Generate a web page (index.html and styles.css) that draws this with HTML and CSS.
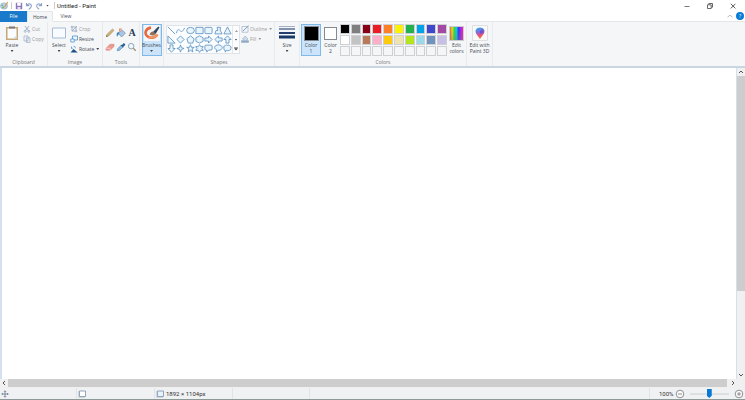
FILE: index.html
```html
<!DOCTYPE html>
<html lang="en">
<head>
<meta charset="utf-8">
<title>Untitled - Paint</title>
<link rel="stylesheet" href="styles.css">
</head>
<body>
<header class="titlebar">
  <svg class="app-icon" viewBox="0 0 9 9"><ellipse cx="4" cy="5" rx="3.6" ry="3.2" fill="#b9d3df" stroke="#91a9b5" stroke-width=".5"/><circle cx="2.2" cy="4.2" r=".8" fill="#4ca7d8"/><circle cx="3" cy="6.4" r=".8" fill="#63ae58"/><path d="M3.8 5.8 7.2.8l1 .7-3 5z" fill="#cda36d"/></svg>
  <span class="divider"></span>
  <button class="quick save" aria-label="Save"><svg viewBox="0 0 8 8"><path d="M.8.8h6.4v6.4H.8z" fill="#8b78bb"/><path d="M2.2.8h3.6v3H2.2z" fill="#fff"/><path d="M2.5 5h3v2.2h-3z" fill="#e6e1f3"/></svg></button>
  <button class="quick" aria-label="Undo"><svg viewBox="0 0 8 8"><path d="M1.5 1v2.6h2.8M1.8 3.2C4 .7 7 2 6.3 4.4 6 5.8 5 6.6 3.8 7.2" fill="none" stroke="#8c9fc6" stroke-width="1.1"/></svg></button>
  <button class="quick" aria-label="Redo"><svg viewBox="0 0 8 8"><path d="M6.5 1v2.6H3.7M6.2 3.2C4 .7 1 2 1.7 4.4 2 5.8 3 6.6 4.2 7.2" fill="none" stroke="#91a6c6" stroke-width="1.1"/></svg></button>
  <button class="more" aria-label="Customize toolbar"><i class="caret"></i></button>
  <span class="divider"></span>
  <h1>Untitled - Paint</h1>
  <div class="window-controls">
    <button aria-label="Minimize"><svg viewBox="0 0 8 8"><path d="M1.5 4.5h5" stroke="#555" stroke-width=".8"/></svg></button>
    <button aria-label="Restore"><svg viewBox="0 0 8 8"><path d="M1.5 2.8h3.7v3.7H1.5zM2.8 2.6V1.5h3.7v3.7H5.4" fill="none" stroke="#444" stroke-width=".8"/></svg></button>
    <button aria-label="Close"><svg viewBox="0 0 8 8"><path d="m1.8 1.8 4.6 4.6M6.4 1.8 1.8 6.4" stroke="#333" stroke-width=".8"/></svg></button>
  </div>
</header>
<nav class="tabs">
  <button class="tab file">File</button><button class="tab active">Home</button><button class="tab">View</button>
  <div class="help">
    <button aria-label="Collapse ribbon"><svg viewBox="0 0 8 8"><path d="m1.5 5.2 2.5-2 2.5 2" fill="none" stroke="#aaa" stroke-width=".8"/></svg></button>
    <button aria-label="Help" class="help-button">?</button>
  </div>
</nav>
<main class="ribbon">
  <section class="group">
    <div class="tools clipboard">
      <button class="big"><svg class="large" viewBox="0 0 16 16"><path d="M2 2h12v13H2z" fill="#c6a878"/><path d="M3.5 3.5h9v10h-9z" fill="#fafcff"/><path d="M5 1.5h6v2H5z" fill="#797979"/><path d="M9.5 13.5h3v-3z" fill="#cad5df"/></svg><span>Paste</span><i class="caret"></i></button>
      <div class="stack">
        <button class="row dim"><svg viewBox="0 0 8 8"><path d="m2 1 3.4 4.5M6 1 2.6 5.5" stroke="#8ba2bd" stroke-width=".8"/><circle cx="2.2" cy="6.3" r="1" fill="none" stroke="#8ba2bd" stroke-width=".7"/><circle cx="5.8" cy="6.3" r="1" fill="none" stroke="#8ba2bd" stroke-width=".7"/></svg>Cut</button>
        <button class="row dim"><svg viewBox="0 0 8 8"><path d="M1 1h4v5H1zM3.5 2.8H7v4.7H3.5z" fill="#eef3f9" stroke="#9caec3" stroke-width=".7"/></svg>Copy</button>
      </div>
    </div>
    <h2>Clipboard</h2>
  </section>
  <section class="group">
    <div class="tools image">
      <button class="big"><svg class="large" viewBox="0 0 16 16"><path d="M1.5 3h13v10h-13z" fill="#f8fbff" stroke="#9db4cf" stroke-width=".9"/></svg><span>Select</span><i class="caret"></i></button>
      <div class="stack">
        <button class="row dim"><svg viewBox="0 0 8 8"><path d="M2 .8V6h5.2M.8 2H6v5.2M2.2 5.8 7 1" fill="none" stroke="#91a5bd" stroke-width=".8"/></svg>Crop</button>
        <button class="row"><svg viewBox="0 0 8 8"><path d="M2.5 1h5v4h-5z" fill="#eff8ff" stroke="#4e92cd" stroke-width=".8"/><path d="M.8 4h3.4v3H.8z" fill="#fff" stroke="#4e92cd" stroke-width=".8"/></svg>Resize</button>
        <button class="row"><svg viewBox="0 0 8 8"><path d="M.5 7.5h7.3L3.5 4z" fill="#1f4f86"/><path d="M1 3.8V1l2 2.8z" fill="#5aa1d8"/><path d="M3.5 1.2q2 0 2 2" fill="none" stroke="#4e92cd" stroke-width=".7"/></svg>Rotate<i class="caret"></i></button>
      </div>
    </div>
    <h2>Image</h2>
  </section>
  <section class="group">
    <div class="tools tool-grid">
      <button aria-label="Pencil"><svg viewBox="0 0 8 8"><path d="m1 7 .6-2L6 .8l1.2 1.1L3 6.3z" fill="#d5b477" stroke="#9b815c" stroke-width=".4"/><path d="m1 7 .4-1.2.8.8z" fill="#444"/></svg></button>
      <button aria-label="Fill with color"><svg viewBox="0 0 8 8"><path d="m2 4.5 2.7-3L7.5 4 4.5 7.2z" fill="#a9c5df" stroke="#6685a6" stroke-width=".5"/><path d="M2.2 3C0 3.8.5 5.5.8 7l1.7-2.5" fill="#3387c7"/><path d="M3 3V.8h1.5" fill="none" stroke="#df8053" stroke-width=".9"/></svg></button>
      <button aria-label="Text" class="text-tool">A</button>
      <button aria-label="Eraser"><svg viewBox="0 0 8 8"><path d="M.8 5 4 1.8h3.2v1.7L4.2 6.5H.8z" fill="#ec9a91" stroke="#ca7d76" stroke-width=".4"/><path d="M.8 5h3.3v1.5" fill="none" stroke="#fad2cd" stroke-width=".7"/></svg></button>
      <button aria-label="Color picker"><svg viewBox="0 0 8 8"><path d="m1 7 .5-1.8L4 2.7l1.4 1.4-2.5 2.5z" fill="#8fc0e5" stroke="#4d7ca8" stroke-width=".5"/><path d="M3.6 2.3 5 2.1 6 .9q1.8.2 1.2 1.7L6 3.5l-.3 1z" fill="#245c96"/></svg></button>
      <button aria-label="Magnifier"><svg viewBox="0 0 8 8"><circle cx="3.3" cy="3.3" r="2.2" fill="#eef7ff" stroke="#93a8bb" stroke-width=".8"/><path d="m5 5 2 2" stroke="#a88865"/></svg></button>
    </div>
    <h2>Tools</h2>
  </section>
  <section class="group">
    <button class="big selected brushes"><svg class="large" viewBox="0 0 16 16"><path d="M0 0h16v16H0z" fill="#f3f5f6"/><path d="M7 2.6C1 3.5.3 9 3.3 11.3c3 2.4 8 1.7 10-1.8" fill="none" stroke="#e9683b" stroke-width="2.6"/><path d="M4.8 12.2c3.5.8 7-.2 8.5-2.7" fill="none" stroke="#ee9664" stroke-width="2"/><path d="M5.5 9.5c1-3.2 3.1-3.5 4.7-2.8l1.2 2C9.8 11.4 7.8 10.8 5.5 9.5z" fill="#94705a"/><path d="m9.4 6.4 4.9-5 1.2 1.2-4 6.3z" fill="#34465d"/></svg><span>Brushes</span><i class="caret"></i></button>
  </section>
  <section class="group">
    <div class="tools shapes-area">
      <div class="gallery">
        <div class="shapes">
          <button aria-label="Line"><svg viewBox="0 0 10 10"><path d="m1 1 8 8"/></svg></button>
          <button aria-label="Curve"><svg viewBox="0 0 10 10"><path d="M.5 8C3-3 5 13 9.5 2"/></svg></button>
          <button aria-label="Oval"><svg viewBox="0 0 10 10"><ellipse cx="5" cy="5" rx="4.3" ry="3.5"/></svg></button>
          <button aria-label="Rectangle"><svg viewBox="0 0 10 10"><path d="M1 1.5h8v7H1z"/></svg></button>
          <button aria-label="Rounded rectangle"><svg viewBox="0 0 10 10"><rect x="1" y="1.5" width="8" height="7" rx="1.3"/></svg></button>
          <button aria-label="Polygon"><svg viewBox="0 0 10 10"><path d="M1 8.8 2.2 5h2L3.4 1.5h4l-.6 3L9 8.8z"/></svg></button>
          <button aria-label="Triangle"><svg viewBox="0 0 10 10"><path d="m5 1 4 7.8H1z"/></svg></button>
          <button aria-label="Right triangle"><svg viewBox="0 0 10 10"><path d="M1 1v8h8z"/></svg></button>
          <button aria-label="Diamond"><svg viewBox="0 0 10 10"><path d="m5 1 4 4-4 4-4-4z"/></svg></button>
          <button aria-label="Pentagon"><svg viewBox="0 0 10 10"><path d="m5 1 4 3.2L7.5 9h-5L1 4.2z"/></svg></button>
          <button aria-label="Hexagon"><svg viewBox="0 0 10 10"><path d="m5 1 4 2v4L5 9 1 7V3z"/></svg></button>
          <button aria-label="Right arrow"><svg viewBox="0 0 10 10"><path d="M1 3.3h4V1l4 4-4 4V6.7H1z"/></svg></button>
          <button aria-label="Left arrow"><svg viewBox="0 0 10 10"><path d="M9 3.3H5V1L1 5l4 4V6.7h4z"/></svg></button>
          <button aria-label="Up arrow"><svg viewBox="0 0 10 10"><path d="M3.3 9V5H1l4-4 4 4H6.7v4z"/></svg></button>
          <button aria-label="Down arrow"><svg viewBox="0 0 10 10"><path d="M3.3 1v4H1l4 4 4-4H6.7V1z"/></svg></button>
          <button aria-label="Four point star"><svg viewBox="0 0 10 10"><path d="m5 1 1 3 3 1-3 1-1 3-1-3-3-1 3-1z"/></svg></button>
          <button aria-label="Five point star"><svg viewBox="0 0 10 10"><path d="m5 .8 1.1 2.9h3.1L6.8 5.6l.8 3.2L5 7 2.4 8.8l.8-3.2L.8 3.7h3.1z"/></svg></button>
          <button aria-label="Six point star"><svg viewBox="0 0 10 10"><path d="m5 .7 1.4 2.2h2.8L7.8 5l1.4 2.1H6.4L5 9.3 3.6 7.1H.8L2.2 5 .8 2.9h2.8z"/></svg></button>
          <button aria-label="Rounded callout"><svg viewBox="0 0 10 10"><path d="M2 1.3h6q1 0 1 1v3.4q0 1-1 1H5L3 9V6.7H2q-1 0-1-1V2.3q0-1 1-1z"/></svg></button>
          <button aria-label="Oval callout"><svg viewBox="0 0 10 10"><path d="M5 1c5.5 0 5.5 6 0 6L2.6 9 3 6.5C-1 5 .5 1 5 1z"/></svg></button>
          <button aria-label="Cloud callout"><svg viewBox="0 0 10 10"><path d="M3 1.5q1-1 2 0 2-1 2.5.5Q10 3 8.7 5 9 7 7 7 5 8 4 7L2.5 9V7Q.5 7 1 5-.2 2 3 1.5z"/></svg></button>
        </div>
        <div class="gallery-nav"><button aria-label="Previous shapes"><i class="caret up"></i></button><button aria-label="Next shapes"><i class="caret"></i></button><button aria-label="All shapes"><i class="caret all"></i></button></div>
      </div>
      <div class="stack">
        <button class="row dim"><svg viewBox="0 0 8 8"><path d="M1 1.5h6v5.7H1z" fill="#f7f9fb" stroke="#9bb1c7" stroke-width=".7"/><path d="M2 6 7.5.8" stroke="#7997b5"/></svg>Outline<i class="caret"></i></button>
        <button class="row dim"><svg viewBox="0 0 8 8"><path d="M.2 5.3h7.6v2.4H.2z" fill="#8ea8c3"/><path d="M1.5 4 4.2 1 7 4 4.8 6z" fill="#cdddec" stroke="#8ea8c3" stroke-width=".6"/></svg>Fill<i class="caret"></i></button>
      </div>
    </div>
    <h2>Shapes</h2>
  </section>
  <section class="group">
    <button class="big size"><svg class="large" viewBox="0 0 16 16"><path d="M0 1.5h16" stroke="#a3b0c5"/><path d="M0 4h16" stroke="#8092b0" stroke-width="2"/><path d="M0 8h16" stroke="#213f70" stroke-width="2"/><path d="M0 12h16" stroke="#183a69" stroke-width="3"/></svg><span>Size</span><i class="caret"></i></button>
  </section>
  <section class="group">
    <div class="tools colors">
      <button class="big selected color-one"><i class="swatch"></i><span>Color<br>1</span></button>
      <button class="big color-two"><i class="swatch"></i><span>Color<br>2</span></button>
      <div class="palette">
        <button class="black" aria-label="Black"></button><button class="gray" aria-label="Gray"></button><button class="maroon" aria-label="Dark red"></button><button class="red" aria-label="Red"></button><button class="orange" aria-label="Orange"></button><button class="yellow" aria-label="Yellow"></button><button class="green" aria-label="Green"></button><button class="blue" aria-label="Turquoise"></button><button class="indigo" aria-label="Indigo"></button><button class="purple" aria-label="Purple"></button>
        <button class="white" aria-label="White"></button><button class="silver" aria-label="Light gray"></button><button class="brown" aria-label="Brown"></button><button class="rose" aria-label="Rose"></button><button class="gold" aria-label="Gold"></button><button class="cream" aria-label="Light yellow"></button><button class="lime" aria-label="Lime"></button><button class="aqua" aria-label="Light turquoise"></button><button class="steel" aria-label="Blue gray"></button><button class="lavender" aria-label="Lavender"></button>
        <button aria-label="Custom 1"></button><button aria-label="Custom 2"></button><button aria-label="Custom 3"></button><button aria-label="Custom 4"></button><button aria-label="Custom 5"></button><button aria-label="Custom 6"></button><button aria-label="Custom 7"></button><button aria-label="Custom 8"></button><button aria-label="Custom 9"></button><button aria-label="Custom 10"></button>
      </div>
      <button class="big edit-colors"><i class="rainbow"></i><span>Edit<br>colors</span></button>
    </div>
    <h2>Colors</h2>
  </section>
  <section class="group">
    <button class="big paint3d"><svg class="large" viewBox="0 0 16 16"><defs><linearGradient id="drop" x2=".3" y2="1"><stop stop-color="#23b9ed"/><stop offset=".45" stop-color="#7b70df"/><stop offset=".7" stop-color="#e84b87"/><stop offset="1" stop-color="#f27332"/></linearGradient></defs><path d="M.5.5h15v15H.5z" fill="#f9f9f9" stroke="#d7d8da" stroke-width=".8"/><path d="M8 14 4.4 9C2.2 5.5 4.3 2.5 8 2.5s5.8 3 3.6 6.5z" fill="url(#drop)"/><path d="M8 6 11 4.2 11.5 8 8 9z" fill="#6556cf"/></svg><span>Edit with<br>Paint 3D</span></button>
  </section>
</main>
<div class="workspace">
  <div class="canvas"></div>
  <div class="scroll vertical"><button aria-label="Scroll up"><svg viewBox="0 0 8 8"><path d="m2 5 2-2 2 2"/></svg></button><div class="track"><div class="thumb"></div></div><button aria-label="Scroll down"><svg viewBox="0 0 8 8"><path d="m2 3 2 2 2-2"/></svg></button></div>
</div>
<div class="scroll horizontal"><button aria-label="Scroll left"><svg viewBox="0 0 8 8"><path d="M5 2 3 4l2 2"/></svg></button><div class="track"><div class="thumb"></div></div><button aria-label="Scroll right"><svg viewBox="0 0 8 8"><path d="m3 2 2 2-2 2"/></svg></button></div>
<footer class="status">
  <div><svg viewBox="0 0 8 8"><path d="M4 .8v6.4M.8 4h6.4M3 1.8l1-1 1 1M3 6.2l1 1 1-1M1.8 3l-1 1 1 1M6.2 3l1 1-1 1" fill="none" stroke="#536b84" stroke-width=".7"/></svg></div>
  <div><svg viewBox="0 0 8 8"><path d="M1.5 1h6v5.5h-6z" fill="#fff" stroke="#7b91a8" stroke-width=".8"/><path d="M.6 1v6.4H7" fill="none" stroke="#b0bdc9" stroke-width=".6"/></svg></div>
  <div><svg viewBox="0 0 8 8"><path d="M1.5 1h6v5.5h-6z" fill="#e6f2fc" stroke="#7b91a8" stroke-width=".8"/><path d="M.6 1v6.4H7" fill="none" stroke="#b0bdc9" stroke-width=".6"/></svg><span>1892 × 1104px</span></div>
  <div></div><div></div>
  <div class="zoom"><label for="zoom">100%</label><button aria-label="Zoom out"><svg viewBox="0 0 10 10"><circle cx="5" cy="5" r="3.8"/><path d="M3 5h4"/></svg></button><input id="zoom" type="range" min="0" max="100" value="50"><button aria-label="Zoom in"><svg viewBox="0 0 10 10"><circle cx="5" cy="5" r="3.8"/><path d="M3 5h4M5 3v4"/></svg></button></div>
</footer>
</body>
</html>
```
FILE: styles.css
```css
* { box-sizing: border-box; }
body { margin: 0; height: 100vh; overflow: hidden; display: flex; flex-direction: column; background: #fff; color: #454b54; font: 5px/6px "Open Sans", sans-serif; }
button { display: flex; align-items: center; justify-content: center; padding: 0; border: 0; background: transparent; color: inherit; font: inherit; }
svg { display: block; width: 8px; height: 8px; flex: none; }
h1, h2 { margin: 0; font-weight: 400; }
.caret { width: 3px; height: 2px; background: #444; clip-path: polygon(0 0, 100% 0, 50% 100%); flex: none; }
.titlebar { flex: 0 0 11px; display: flex; align-items: center; gap: 2px; }
.app-icon { width: 9px; height: 9px; }
.divider { width: 1px; height: 7px; background: #ccc; }
.titlebar .save { margin-left: 1px; }
.more { width: 5px; height: 8px; }
.titlebar .more + .divider { margin-left: 2px; }
h1 { font: 6px/8px Roboto, sans-serif; color: #222; }
.window-controls { margin-left: auto; display: flex; gap: 15px; padding-right: 8px; }
.tabs { flex: 0 0 11px; display: flex; align-items: stretch; }
.tab { width: 26px; border-bottom: 1px solid #e4e6e8; }
.file { width: 27px; background: #1979ca; color: #fff; border-color: #1979ca; }
.active { background: #f5f6f7; border: 1px solid #e4e6e8; border-bottom-color: #f5f6f7; }
.help { flex: 1; display: flex; align-items: center; justify-content: flex-end; gap: 2px; padding-right: 1px; border-bottom: 1px solid #e4e6e8; }
.help-button { width: 8px; height: 8px; border-radius: 50%; background: #087bd4; color: #fff; }
.ribbon { flex: 0 0 46px; display: grid; grid-template-columns: 48px 55px 37px 24px 111px 25px 167px 26px; background: #f5f6f7; border-bottom: 2px solid #cad5e3; }
.group { min-width: 0; border-right: 1px solid #e8eaec; display: flex; flex-direction: column; align-items: center; padding-top: 2px; }
.tools { display: flex; width: 100%; height: 34px; align-items: flex-start; }
h2 { text-align: center; color: #777; font-size: 5px; line-height: 8px; }
.big { height: 32px; width: 20px; flex: none; flex-direction: column; justify-content: flex-start; gap: 1px; border: 1px solid transparent; text-align: center; }
.large { width: 16px; height: 16px; }
.big .caret { margin-top: 1px; }
.clipboard { padding-left: 2px; gap: 1px; }
.image { padding-left: 1px; gap: 1px; }
.stack { display: flex; flex-direction: column; align-items: flex-start; }
.row { height: 10px; gap: 1px; white-space: nowrap; }
.row .caret { margin-left: 1px; }
.dim { color: #999; }
.dim .caret { background: #999; }
.tool-grid { display: grid; grid-template-columns: repeat(3, 11px); grid-template-rows: repeat(2, 14px); justify-content: center; padding-top: 2px; }
.tool-grid button { height: 14px; }
.tool-grid svg { width: 10px; height: 10px; }
.tool-grid .text-tool { font: 700 10px/10px "Liberation Serif", serif; color: #263d5b; }
.selected { background: #cce4fb; border-color: #80b8e8; }
.shapes-area { padding: 0 3px 0 2px; gap: 1px; }
.gallery { width: 74px; height: 29px; margin-top: 1px; display: grid; grid-template-columns: 1fr 7px; background: #fcfdfe; border: 1px solid #e0e4e8; flex: none; }
.shapes { display: grid; grid-template-columns: repeat(7, 1fr); grid-template-rows: repeat(3, 9px); }
.shapes svg { width: 9px; height: 9px; fill: #eaf4fd; stroke: #6599c5; stroke-width: 1; }
.shapes button:nth-child(-n+2) svg { fill: none; }
.gallery-nav { display: grid; grid-template-rows: repeat(3, 9px); border-left: 1px solid #e5e8eb; }
.up { transform: rotate(180deg); background: #999; }
.all { width: 4px; height: 4px; clip-path: polygon(0 0, 100% 0, 100% 25%, 0 25%, 0 45%, 100% 45%, 50% 100%, 0 45%); }
.colors { padding-left: 1px; }
.swatch { width: 15px; height: 15px; margin-top: 1px; border: 1px solid #858a90; background: #000; }
.color-two .swatch { width: 13px; height: 13px; margin: 2px 0 1px; background: #fff; }
.color-two { width: 19px; }
.palette { flex: 1; display: grid; grid-template-columns: repeat(10, 1fr); grid-auto-rows: 10px; column-gap: 1px; row-gap: 1px; }
.palette button { border: 1px solid #ced0d3; background: #f5f6f7; }
.palette .black { background: #000; }
.palette .gray { background: #7f7f7f; }
.palette .maroon { background: #880015; }
.palette .red { background: #ed1c24; }
.palette .orange { background: #ff7f27; }
.palette .yellow { background: #fff200; }
.palette .green { background: #22b14c; }
.palette .blue { background: #00a2e8; }
.palette .indigo { background: #3f48cc; }
.palette .purple { background: #a349a4; }
.palette .white { background: #fff; }
.palette .silver { background: #c3c3c3; }
.palette .brown { background: #b97a57; }
.palette .rose { background: #ffaec9; }
.palette .gold { background: #ffc90e; }
.palette .cream { background: #efe4b0; }
.palette .lime { background: #b5e61d; }
.palette .aqua { background: #99d9ea; }
.palette .steel { background: #7092be; }
.palette .lavender { background: #c8bfe7; }
.edit-colors { width: 19px; }
.rainbow { width: 15px; height: 15px; margin-top: 1px; border: 1px solid #c9cdd1; background: linear-gradient(#0000 25%, #7775), linear-gradient(90deg, #f0603a, #dedb25, #35d83c, #12c5dd, #3038f1, #b420ec, #f92b97); }
.paint3d { width: 25px; white-space: nowrap; }
.workspace { flex: 1; min-height: 0; display: flex; background: #d4e0ed; }
.canvas { flex: 1; background: #fff; margin: 0 1px 0 2px; }
.scroll { display: flex; background: #f0f0f0; }
.scroll button, .scroll svg { width: 8px; height: 8px; }
.scroll path { fill: none; stroke: #555; stroke-width: 1; }
.scroll .track { flex: 1; }
.thumb { background: #cdcdcd; }
.vertical { flex: 0 0 8px; flex-direction: column; }
.vertical .thumb { width: 100%; height: 73%; }
.horizontal { flex: 0 0 9px; padding-right: 8px; }
.horizontal .track { padding-right: 2px; }
.horizontal .thumb { height: 8px; }
.status { flex: 0 0 12px; display: grid; grid-template-columns: 77px 78px 78px 77px 1fr 95px; background: #f0f1f2; border-bottom: 1px solid #8d9996; font: 6px/8px Roboto, sans-serif; color: #333; }
.status > div { display: flex; align-items: center; gap: 2px; padding-left: 1px; border-right: 1px solid #e1e3e5; }
.status > div.zoom { border: 0; gap: 1px; padding: 0 1px 0 9px; }
.zoom svg { width: 10px; height: 10px; fill: #fafafa; stroke: #777; stroke-width: .8; }
.zoom input { appearance: none; flex: 1; min-width: 0; height: 10px; margin: 0 4px; background: linear-gradient(#dedfe0, #dedfe0) center / 100% 2px no-repeat; }
.zoom input::-webkit-slider-thumb { appearance: none; width: 5px; height: 9px; background: #0878d4; clip-path: polygon(0 0, 100% 0, 100% 75%, 50% 100%, 0 75%); }
```
